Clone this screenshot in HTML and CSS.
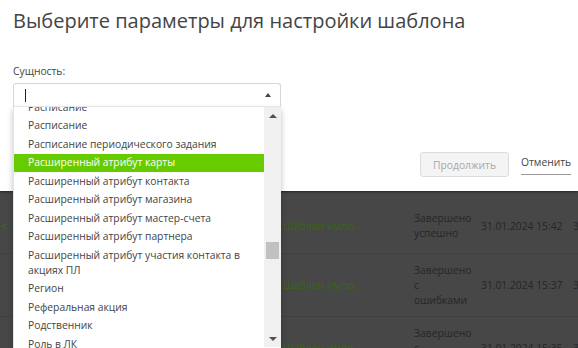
FILE: index.html
```html
<!DOCTYPE html>
<html lang="ru">
<head>
<meta charset="utf-8">
<link rel="stylesheet" href="styles.css">
</head>
<body>
<div class="dialog">
  <h1 class="title">Выберите параметры для настройки шаблона</h1>
  <div class="field">
    <label class="label">Сущность:</label>
    <div class="select">
      <div class="select-box">
        <span class="caret"></span>
        <span class="arrow-up"></span>
      </div>
      <div class="dropdown">
        <ul class="options">
          <li>Расписание</li>
          <li>Расписание</li>
          <li>Расписание периодического задания</li>
          <li class="active">Расширенный атрибут карты</li>
          <li>Расширенный атрибут контакта</li>
          <li>Расширенный атрибут магазина</li>
          <li>Расширенный атрибут мастер-счета</li>
          <li>Расширенный атрибут партнера</li>
          <li>Расширенный атрибут участия контакта в акциях ПЛ</li>
          <li>Регион</li>
          <li>Реферальная акция</li>
          <li>Родственник</li>
          <li>Роль в ЛК</li>
          <li>Роль пользователя</li>
        </ul>
        <div class="scrollbar">
          <span class="sb-up"></span>
          <span class="sb-track"><span class="sb-thumb"></span></span>
          <span class="sb-down"></span>
        </div>
      </div>
    </div>
  </div>
  <div class="actions">
    <button class="btn-continue" disabled>Продолжить</button>
    <a class="btn-cancel">Отменить</a>
  </div>
</div>
<div class="table">
  <div class="row first">
    <div class="c-back">&lt;</div>
    <div class="c-name">Шаблон импо...</div>
    <div class="c-status">Завершено<br>успешно</div>
    <div class="c-date">31.01.2024 15:42</div>
    <div class="c-more">3</div>
  </div>
  <div class="row">
    <div class="c-back"></div>
    <div class="c-name">Шаблон импо...</div>
    <div class="c-status">Завершено<br>с<br>ошибками</div>
    <div class="c-date">31.01.2024 15:37</div>
    <div class="c-more">3</div>
  </div>
  <div class="row">
    <div class="c-back"></div>
    <div class="c-name">Шаблон импо...</div>
    <div class="c-status">Завершено<br>с<br>ошибками</div>
    <div class="c-date">31.01.2024 15:35</div>
    <div class="c-more">3</div>
  </div>
</div>
</body>
</html>
```
FILE: styles.css
```css
* { box-sizing: border-box; }
html, body { margin: 0; padding: 0; }
body {
  width: 578px;
  height: 348px;
  overflow: hidden;
  background: #474747;
  font-family: "Open Sans", "Liberation Sans", sans-serif;
  color: #444;
}
.dialog {
  position: relative;
  z-index: 2;
  background: #fff;
  height: 191px;
  padding: 0 0 0 13px;
  box-shadow: 0 1px 2px rgba(0,0,0,0.5);
}
.title {
  margin: 0;
  padding-top: 5px;
  font-size: 20px;
  font-weight: 400;
  line-height: 32px;
  color: #444;
}
.field { margin-top: 27px; width: 268px; }
.label {
  display: block;
  font-size: 10.3px;
  line-height: 15px;
  color: #444;
  margin-bottom: 4px;
}
.select { position: relative; }
.select-box {
  height: 24px;
  border: 1px solid #d6d6d6;
  border-radius: 3px 3px 0 0;
  border-bottom-color: #eee;
  display: flex;
  align-items: center;
  justify-content: space-between;
  padding: 0 8px 0 11px;
}
.caret { width: 1px; height: 13px; background: #222; }
.arrow-up {
  width: 0; height: 0;
  border-left: 3.5px solid transparent;
  border-right: 3.5px solid transparent;
  border-bottom: 4px solid #444;
  margin-right: 1px;
}
.dropdown {
  position: absolute;
  top: 100%;
  left: 0;
  width: 268px;
  height: 250px;
  background: #fff;
  border-left: 1px solid #e4e4e4;
  box-shadow: 0 3px 6px rgba(0,0,0,0.25);
  display: flex;
  overflow: hidden;
}
.options {
  list-style: none;
  margin: -9px 0 0 0;
  padding: 0;
  flex: 1;
  font-size: 10.3px;
  line-height: 15px;
  color: #444;
}
.options li {
  padding: 1.75px 14px 1.75px 14px;
}
.options li.active {
  background: #66cc00;
  color: #fff;
}
.scrollbar {
  width: 17px;
  flex: none;
  height: 240px;
  background: #f0f0f0;
  display: flex;
  flex-direction: column;
  align-items: center;
}
.sb-up, .sb-down {
  flex: none;
  height: 17px;
  width: 17px;
  display: flex;
  align-items: center;
  justify-content: center;
}
.sb-up::before {
  content: "";
  border-left: 4px solid transparent;
  border-right: 4px solid transparent;
  border-bottom: 4px solid #505050;
}
.sb-down::before {
  content: "";
  border-left: 4px solid transparent;
  border-right: 4px solid transparent;
  border-top: 4px solid #505050;
}
.sb-track { flex: 1; width: 100%; padding: 118px 2px 0 2px; }
.sb-thumb { display: block; height: 17px; background: #c1c1c1; }
.actions {
  position: absolute;
  left: 420px;
  top: 152px;
  display: flex;
  align-items: center;
  gap: 12px;
}
.btn-continue {
  width: 89px;
  height: 25px;
  border: 1px solid #dcdcdc;
  border-radius: 3px;
  background: #f4f4f4;
  color: #a8a8a8;
  font-family: inherit;
  font-size: 10.3px;
  padding: 0;
}
.btn-cancel {
  font-size: 10.3px;
  line-height: 15px;
  color: #444;
  padding-bottom: 4px;
  border-bottom: 1px solid #999;
}
.table { position: relative; z-index: 1; }
.row {
  display: grid;
  grid-template-columns: 283px 131px 67px 92px 40px;
  align-items: center;
  height: 63px;
  border-bottom: 1px solid #404040;
  font-size: 10.3px;
  line-height: 15px;
  color: #262626;
}
.row.first { padding-top: 8px; height: 63px; }
.c-back { color: #3d6b12; padding-left: 1px; font-size: 12px; }
.c-name { color: #3a6612; }
.c-status { white-space: nowrap; }
.c-date { white-space: nowrap; }
.c-more { white-space: nowrap; }
```
